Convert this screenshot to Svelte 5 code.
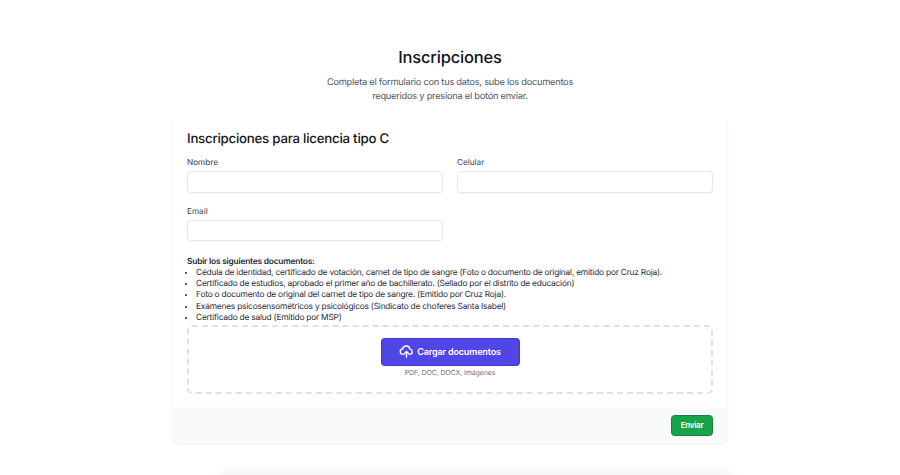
<script>
  const docs = [
    'Cédula de identidad, certificado de votación, carnet de tipo de sangre (Foto o documento de original, emitido por Cruz Roja).',
    'Certificado de estudios, aprobado el primer año de bachillerato. (Sellado por el distrito de educación)',
    'Foto o documento de original del carnet de tipo de sangre. (Emitido por Cruz Roja).',
    'Exámenes psicosensométricos y psicológicos (Sindicato de choferes Santa Isabel)',
    'Certificado de salud (Emitido por MSP)'
  ];
</script>

<div class="page">
  <header class="intro">
    <h1>Inscripciones</h1>
    <p>Completa el formulario con tus datos, sube los documentos<br />requeridos y presiona el botón enviar.</p>
  </header>

  <form class="card" on:submit|preventDefault>
    <div class="body">
      <h2>Inscripciones para licencia tipo C</h2>
      <div class="grid">
        <label class="field">
          <span>Nombre</span>
          <input type="text" />
        </label>
        <label class="field">
          <span>Celular</span>
          <input type="text" />
        </label>
        <label class="field">
          <span>Email</span>
          <input type="email" />
        </label>
      </div>

      <div class="docs">
        <strong>Subir los siguientes documentos:</strong>
        <ul>
          {#each docs as doc}
            <li>{doc}</li>
          {/each}
        </ul>
      </div>

      <div class="drop">
        <button type="button" class="upload">
          <svg viewBox="0 0 24 24" width="15" height="15" fill="none" stroke="currentColor" stroke-width="2.2" stroke-linecap="round" stroke-linejoin="round">
            <path d="M8 16.5H6.5a4.5 4.5 0 0 1-.6-8.96A6 6 0 0 1 17.6 8.1a4.3 4.3 0 0 1 .4 8.4H16" />
            <path d="M12 21v-9M8.8 15 12 11.8l3.2 3.2" />
          </svg>
          Cargar documentos
        </button>
        <small>PDF, DOC, DOCX, Imágenes</small>
      </div>
    </div>
    <footer>
      <button type="submit" class="send">Enviar</button>
    </footer>
  </form>

  <div class="next"></div>
</div>

<style>
  :global(body) {
    margin: 0;
    background: #fff;
    overflow: hidden;
  }
  .page {
    height: 475px;
    overflow: hidden;
    display: flex;
    flex-direction: column;
    align-items: center;
    font-family: Inter, 'Liberation Sans', sans-serif;
    color: #0f1420;
    text-rendering: geometricPrecision;
  }
  .intro {
    padding-top: 46px;
    text-align: center;
  }
  h1 {
    margin: 0;
    font-size: 16.5px;
    line-height: 22px;
    font-weight: 500;
    letter-spacing: -0.2px;
  }
  .intro p {
    margin: 8px 0 0;
    font-size: 9.25px;
    line-height: 14px;
    letter-spacing: -0.245px;
    color: #4b5563;
  }
  .card {
    flex: none;
    width: 554px;
    margin-top: 15px;
    border-radius: 5px;
    background: #fff;
    box-shadow: 0 1px 3px rgba(0, 0, 0, 0.08);
    overflow: hidden;
  }
  .body {
    padding: 11px 14px 13px;
  }
  h2 {
    margin: 0;
    font-size: 13.25px;
    line-height: 19px;
    font-weight: 500;
    letter-spacing: -0.235px;
  }
  .grid {
    display: grid;
    grid-template-columns: 1fr 1fr;
    gap: 12px 14px;
    margin-top: 7px;
  }
  .field {
    display: flex;
    flex-direction: column;
    gap: 3px;
  }
  .field span {
    font-size: 8.2px;
    line-height: 12px;
    color: #374151;
  }
  input {
    box-sizing: border-box;
    height: 21.5px;
    border: 1px solid #e5e7eb;
    border-radius: 4px;
    padding: 0 7px;
    outline: none;
    box-shadow: 0 1px 2px rgba(0, 0, 0, 0.05);
  }
  .docs {
    margin-top: 15.5px;
    font-size: 8.4px;
    line-height: 11.25px;
    letter-spacing: -0.22px;
    color: #1f2937;
  }
  .docs strong {
    font-weight: 600;
  }
  ul {
    margin: 0;
    padding-left: 9px;
  }
  .drop {
    display: flex;
    flex-direction: column;
    align-items: center;
    height: 69px;
    box-sizing: border-box;
    padding-top: 11px;
    border: 2px dashed #dfe1e5;
    border-radius: 5px;
    margin-top: 0.5px;
  }
  .upload {
    display: flex;
    align-items: center;
    justify-content: center;
    gap: 3px;
    width: 139px;
    height: 28px;
    padding: 0;
    border: 1px solid #4338ca;
    border-radius: 3.5px;
    background: #4f46e5;
    color: #fff;
    font: 600 9px Inter, 'Liberation Sans', sans-serif;
    letter-spacing: -0.15px;
  }
  small {
    margin-top: 1px;
    font-size: 7px;
    line-height: 11px;
    letter-spacing: -0.12px;
    color: #6b7280;
  }
  footer {
    display: flex;
    justify-content: flex-end;
    padding: 8px 14px 7px;
    background: #f9fafb;
  }
  .send {
    width: 42px;
    height: 21px;
    padding: 0;
    border: 1px solid #15803d;
    border-radius: 3.5px;
    background: #16a34a;
    color: #fff;
    font: 600 8px Inter, 'Liberation Sans', sans-serif;
    letter-spacing: -0.25px;
  }
  /* next card, only its shadow peeks in at the fold */
  .next {
    flex: none;
    position: relative;
    width: 554px;
    height: 60px;
    margin-top: 27px;
    border-radius: 5px;
    box-shadow: 0 0 2px rgba(0, 0, 0, 0.04);
  }
  .next::before {
    content: '';
    position: absolute;
    top: 5px;
    left: 50px;
    right: 0;
    height: 40px;
    background: #f0f0f0;
    box-shadow: 0 0 14px 2px rgba(0, 0, 0, 0.08);
  }
</style>
